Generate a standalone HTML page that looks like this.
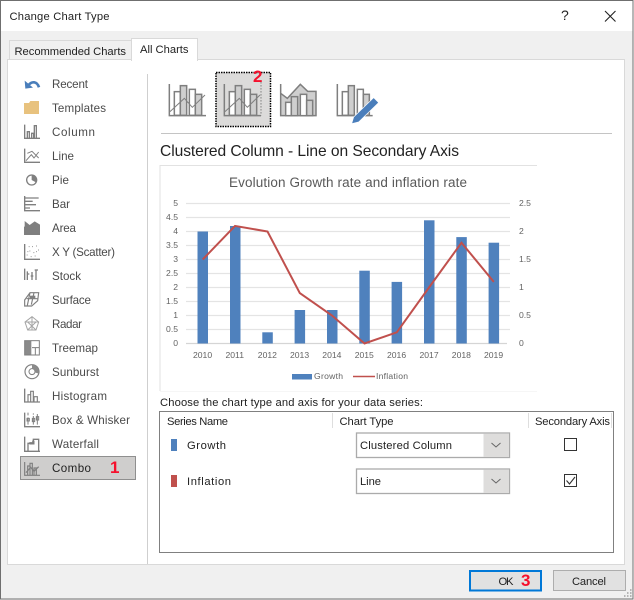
<!DOCTYPE html>
<html><head><meta charset="utf-8"><title>Change Chart Type</title>
<style>
html,body{margin:0;padding:0;width:634px;height:600px;overflow:hidden;background:#f0f0f0}
svg{display:block}
text{font-family:"Liberation Sans",sans-serif;font-size:12px;fill:#222}
.s{font-size:11.2px}
.l text{fill:#4a4a4a;font-size:11.6px}
.a text{font-size:8.6px;fill:#636363}
.n text{font-size:17px;font-weight:bold;fill:#f5112d}
.ic{fill:none;stroke:#7f7f7f;stroke-width:4}
</style></head><body>
<svg width="634" height="600" viewBox="0 0 634 600" xmlns="http://www.w3.org/2000/svg">
<rect width="634" height="600" fill="#f0f0f0"/>
<rect x="0" y="0" width="634" height="31" fill="#fff"/>
<text x="9.500" y="20" class="s" textLength="100">Change Chart Type</text>
<text x="561" y="20" style="font-size:14px">?</text>
<path d="M605 11L615.500 21.500M615.500 11L605 21.500" stroke="#222" stroke-width="1.100" fill="none"/>

<!-- tabs and panel -->
<rect x="9.500" y="40.500" width="122" height="20" fill="#f0f0f0" stroke="#d9d9d9"/>
<rect x="7.500" y="59.500" width="617" height="505" fill="#fff" stroke="#d9d9d9"/>
<rect x="131.500" y="38.500" width="66" height="22" fill="#fff" stroke="#d9d9d9"/>
<rect x="132" y="58" width="65" height="4" fill="#fff"/>
<text x="14.500" y="55" class="s" textLength="111.500">Recommended Charts</text>
<text x="140" y="53" class="s" textLength="48.500">All Charts</text>
<line x1="147.500" y1="74" x2="147.500" y2="564" stroke="#cfcfcf"/>

<!-- left selection -->
<rect x="20.500" y="456.500" width="115" height="23" fill="#cfcecd" stroke="#8f8f8f"/>

<!-- left labels -->
<g class="l">
<text x="52" y="88" textLength="36">Recent</text>
<text x="52" y="112" textLength="54">Templates</text>
<text x="52" y="136" textLength="43">Column</text>
<text x="52" y="160" textLength="22">Line</text>
<text x="52" y="184" textLength="17">Pie</text>
<text x="52" y="208" textLength="18">Bar</text>
<text x="52" y="232" textLength="24">Area</text>
<text x="52" y="256" textLength="63">X Y (Scatter)</text>
<text x="52" y="280" textLength="29">Stock</text>
<text x="52" y="304" textLength="39">Surface</text>
<text x="52" y="328" textLength="30">Radar</text>
<text x="52" y="352" textLength="46">Treemap</text>
<text x="52" y="376" textLength="47">Sunburst</text>
<text x="52" y="400" textLength="55">Histogram</text>
<text x="52" y="424" textLength="78">Box &amp; Whisker</text>
<text x="52" y="448" textLength="47">Waterfall</text>
<text x="52" y="472" textLength="39" style="fill:#222">Combo</text>
</g>

<!-- left icons, zoom coordinates -->
<g transform="translate(10 70) scale(.33333)">
<path d="M55 46C65 33 81 33 87 52" fill="none" stroke="#4a7ebb" stroke-width="8"/>
<path d="M44 32L46 56L69 53Z" fill="#4a7ebb"/>
<path d="M42 99h15l4-6h26v39h-45z" fill="#e8c27e"/>
<g class="ic">
<path d="M44 164v41h46"/><path d="M52 205v-20h6v20M65 205v-15h6v15M73 205v-38h6v38"/>
<path d="M44 236v41h46" /><path d="M48 272l16-18 8 10 14-18M52 250l14-6 20 20" stroke-width="3"/>
<circle cx="65" cy="330" r="15" stroke-width="4"/><path d="M65 330v-15a15 15 0 0 1 13 22z" fill="#7f7f7f" stroke="none"/>
<path d="M44 378v44h46"/><path d="M44 384h42M44 394h24M44 404h34M44 414h16"/>
<path d="M44 453l15 12 15-11 16 10v29h-46z" fill="#7f7f7f" stroke="none"/><path d="M44 470v23h46"/>
<path d="M44 522v46h46"/>
<path d="M50 555h3M58 543h3M66 530h3M78 528h3M70 548h3M84 540h3M56 530h3M62 560h3M74 558h3M52 545h3M78 545h3" stroke-width="3" stroke="#999"/>
<path d="M44 596v34M52 630v-26M52 612h6M66 630v-24M62 618h8M78 630v-28M74 600h10"/>
</g></g>
<g transform="translate(10 280) scale(.33333)" class="ic">
<path d="M44 60l16-22h26l-3 24-18 16h-21zM50 56h32M60 38l-8 38M72 38l-8 36" stroke-width="3.500"/>
<path d="M60 47h16v9h-16z" fill="#7f7f7f" stroke="none"/>
<path d="M66 110l20 16-8 24h-25l-8-24zM66 110v40M46 126l40 0M53 150l25-24M78 150l-25-24" stroke-width="3" stroke="#a5a5a5"/>
<rect x="44" y="182" width="20" height="43" fill="#8a8a8a" stroke="none"/><rect x="44" y="182" width="44" height="43" stroke-width="3"/><path d="M66 203h22M76 203v22" stroke-width="3"/>
<circle cx="66" cy="275" r="21" stroke-width="3.500"/><circle cx="66" cy="275" r="9" stroke-width="3"/><path d="M66 254a21 21 0 0 1 20 27l-12 -4a9 9 0 0 0-8-11z" fill="#8a8a8a" stroke="none"/>
<path d="M44 326v40h46"/><path d="M54 366v-22h8v22M62 366v-32h8v32M72 366v-16h10v16" stroke-width="3.500"/>
<path d="M44 398v42h46"/><path d="M54 412v22M54 398v8M70 408v26M70 400v4M82 402v32M51 415h7v8h-7zM67 415h7v10h-7zM79 410h7v10h-7z" stroke-width="3"/>
<path d="M44 470v44h46"/><path d="M54 514v-24h16v-12h16v36" stroke-width="4"/><path d="M58 490h12v-8" stroke-width="7"/>
<g stroke-width="3.500"><path d="M44 546v40h46"/><path d="M53 586v-28h7v28M60 586v-36h7v36M72 586v-22h7v22"/><path d="M48 578l14-16 10 12 14-14"/></g>
</g>

<!-- top toolbar -->
<rect x="216" y="72.500" width="54.500" height="54" fill="#dcdbda" stroke="#000" stroke-width="1.500" stroke-dasharray="1.500 1"/>
<g transform="translate(155 65) scale(.33333)" stroke="#7f7f7f" stroke-width="4.500" fill="none">
<g>
<rect x="58" y="80" width="18" height="71" fill="#fff"/><rect x="76" y="62" width="19" height="89" fill="#cfcfcf"/>
<rect x="103" y="73" width="18" height="78" fill="#fff"/><rect x="121" y="88" width="19" height="63" fill="#cfcfcf"/>
<path d="M43 57v95h110"/><path d="M45 140l43-40 24 27 38-37" stroke-width="3"/>
</g>
<g transform="translate(165 0)">
<rect x="58" y="80" width="18" height="71" fill="#fff"/><rect x="76" y="62" width="19" height="89" fill="#cfcfcf"/>
<rect x="103" y="73" width="18" height="78" fill="#fff"/><rect x="121" y="88" width="19" height="63" fill="#cfcfcf"/>
<path d="M43 57v95h110" /><path d="M45 140l43-40 24 27 38-37" stroke-width="3"/>
<path d="M153 52v100" stroke-dasharray="3 6"/>
</g>
<path d="M377 57v95h106v-73h-25l-22-21-39 42-20-15" fill="#cfcfcf"/>
<rect x="392" y="112" width="17" height="40" fill="#fff"/><rect x="409" y="95" width="19" height="57" fill="#cfcfcf"/>
<rect x="436" y="88" width="19" height="64" fill="#fff"/><rect x="455" y="106" width="18" height="46" fill="#cfcfcf"/>
<rect x="562" y="80" width="18" height="71" fill="#fff"/><rect x="580" y="62" width="18" height="89" fill="#cfcfcf"/>
<rect x="607" y="73" width="18" height="78" fill="#fff"/><rect x="625" y="88" width="18" height="63" fill="#cfcfcf"/>
<path d="M547 57v95h106"/>
<path d="M590 176l6-20 60-58 15 15-60 58z" fill="#4a7ebb" stroke="#fff" stroke-width="2"/>
</g>
<line x1="161" y1="133.500" x2="612" y2="133.500" stroke="#c4c4c4"/>

<text x="160" y="156" style="font-size:15.600px" textLength="299">Clustered Column - Line on Secondary Axis</text>

<!-- chart -->
<path d="M160 391V165.500H537" fill="none" stroke="#e2e2e2"/>
<path d="M160 391.500H537" stroke="#f6f6f6"/>
<text x="229" y="187" style="font-size:13.500px;fill:#595959" textLength="238">Evolution Growth rate and inflation rate</text>
<g stroke="#e4e4e4" stroke-width="1.300">
<path d="M186 203.500H510M186 217.500H510M186 231.500H510M186 245.500H510M186 259.500H510M186 273.500H510M186 287.500H510M186 301.500H510M186 315.500H510M186 329.500H510"/>
</g>
<path d="M186 343.500H507" stroke="#d5d5d5" stroke-width="1.300"/>
<g fill="#4f81bd">
<rect x="197.500" y="231.500" width="10.500" height="112"/>
<rect x="230" y="226" width="10.500" height="117.500"/>
<rect x="262.300" y="332.300" width="10.500" height="11.200"/>
<rect x="294.600" y="310" width="10.500" height="33.500"/>
<rect x="327" y="310" width="10.500" height="33.500"/>
<rect x="359.300" y="270.700" width="10.500" height="72.800"/>
<rect x="391.600" y="281.900" width="10.500" height="61.600"/>
<rect x="424" y="220.300" width="10.500" height="123.200"/>
<rect x="456.300" y="237.100" width="10.500" height="106.400"/>
<rect x="488.600" y="242.700" width="10.500" height="100.800"/>
</g>
<polyline points="202.700,259.500 235,225.900 267.500,231.500 299.800,293.100 332,315.500 364.500,343.500 396.800,332.300 429,287.500 461.500,242.700 493.800,281.900" fill="none" stroke="#c0504d" stroke-width="2"/>
<g class="a">
<g text-anchor="end">
<text x="178" y="206">5</text><text x="178" y="220">4.5</text><text x="178" y="234">4</text><text x="178" y="248">3.5</text><text x="178" y="262">3</text><text x="178" y="276">2.5</text><text x="178" y="290">2</text><text x="178" y="304">1.5</text><text x="178" y="318">1</text><text x="178" y="332">0.5</text><text x="178" y="346">0</text>
</g>
<text x="519" y="206">2.5</text><text x="519" y="234">2</text><text x="519" y="262">1.5</text><text x="519" y="290">1</text><text x="519" y="318">0.5</text><text x="519" y="346">0</text>
<text x="193" y="358">2010</text><text x="225.500" y="358">2011</text><text x="257.800" y="358">2012</text><text x="290" y="358">2013</text><text x="322.300" y="358">2014</text><text x="354.700" y="358">2015</text><text x="387" y="358">2016</text><text x="419.500" y="358">2017</text><text x="451.800" y="358">2018</text><text x="484" y="358">2019</text>
<text x="314" y="379" textLength="29">Growth</text><text x="376" y="379" textLength="32">Inflation</text>
</g>
<rect x="292" y="374" width="20" height="5.500" fill="#4f81bd"/>
<line x1="353" y1="376.500" x2="375" y2="376.500" stroke="#c0504d" stroke-width="1.600"/>

<!-- series table -->
<text x="160" y="406" class="s" textLength="263">Choose the chart type and axis for your data series:</text>
<rect x="159.500" y="411.500" width="454" height="141" fill="#fff" stroke="#808080"/>
<path d="M332.500 413v15M528.500 413v15M611.500 413v15" stroke="#dedede"/>
<text x="167" y="425" class="s" textLength="61">Series Name</text>
<text x="339.500" y="425" class="s" textLength="54">Chart Type</text>
<text x="535" y="425" class="s" textLength="75">Secondary Axis</text>
<rect x="171" y="439" width="6" height="12" fill="#4f81bd"/>
<rect x="171" y="475" width="6" height="12" fill="#c0504d"/>
<text x="187" y="449" class="s" textLength="39">Growth</text>
<text x="187" y="485" class="s" textLength="44">Inflation</text>
<rect x="356.500" y="433" width="153" height="24.500" fill="#fff" stroke="#ababab" stroke-width="1.300"/>
<rect x="483.500" y="433.500" width="25.500" height="23.500" fill="#dedddc"/>
<path d="M491.500 443l4.500 4 4.500-4" fill="none" stroke="#666"/>
<rect x="356.500" y="469" width="153" height="24.500" fill="#fff" stroke="#ababab" stroke-width="1.300"/>
<rect x="483.500" y="469.500" width="25.500" height="23.500" fill="#dedddc"/>
<path d="M491.500 479l4.500 4 4.500-4" fill="none" stroke="#666"/>
<text x="360" y="449" class="s" textLength="92">Clustered Column</text>
<text x="360" y="485" class="s" textLength="21">Line</text>
<rect x="564.500" y="438.500" width="12" height="12" fill="#fff" stroke="#333"/>
<rect x="564.500" y="474.500" width="12" height="12" fill="#fff" stroke="#333"/>
<path d="M566.500 480.500l3 3.500 5.500-7" fill="none" stroke="#333" stroke-width="1.100"/>

<!-- buttons -->
<rect x="470" y="571" width="71" height="19.500" fill="#e1e1e1" stroke="#0078d7" stroke-width="2"/>
<rect x="553.500" y="570.500" width="72" height="20" fill="#e1e1e1" stroke="#adadad"/>
<text x="498.500" y="585" class="s" textLength="15">OK</text>
<text x="572" y="585" class="s" textLength="34">Cancel</text>

<g class="n">
<text x="110" y="473">1</text>
<text x="253" y="82">2</text>
<text x="521" y="586">3</text>
</g>

<!-- grip and frame -->
<path d="M630 590h1.500M627 593h1.500M630 593h1.500M624 596h1.500M627 596h1.500M630 596h1.500" stroke="#b5b5b5" stroke-width="2"/>
<rect x=".5" y=".5" width="632.500" height="598.500" fill="none" stroke="#6f6f6f"/>
<rect x="633.500" y="0" width="1" height="600" fill="#fff"/>
</svg>
</body></html>
